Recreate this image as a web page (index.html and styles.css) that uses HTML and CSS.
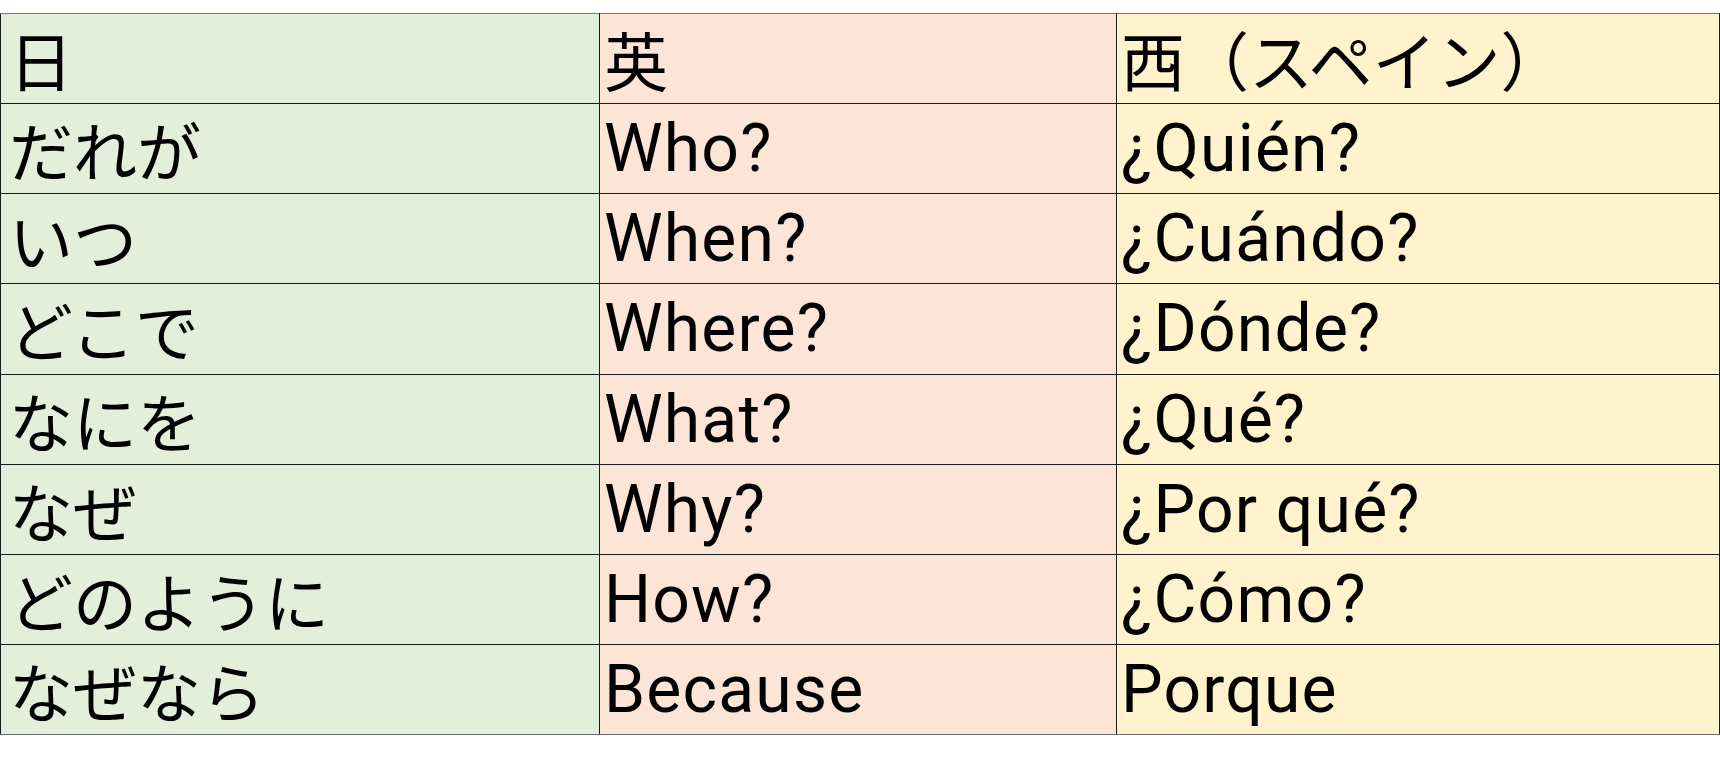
FILE: index.html
```html
<!DOCTYPE html>
<html lang="ja">
<head>
<meta charset="utf-8">
<link rel="stylesheet" href="styles.css">
</head>
<body>
<table class="grid">
  <colgroup>
    <col class="c-ja">
    <col class="c-en">
    <col class="c-es">
  </colgroup>
  <tbody>
    <tr><td class="ja">日</td><td class="en">英</td><td class="es">西（スペイン）</td></tr>
    <tr><td class="ja">だれが</td><td class="en latin">Who?</td><td class="es latin">¿Quién?</td></tr>
    <tr><td class="ja">いつ</td><td class="en latin">When?</td><td class="es latin">¿Cuándo?</td></tr>
    <tr><td class="ja">どこで</td><td class="en latin">Where?</td><td class="es latin">¿Dónde?</td></tr>
    <tr><td class="ja">なにを</td><td class="en latin">What?</td><td class="es latin">¿Qué?</td></tr>
    <tr><td class="ja">なぜ</td><td class="en latin">Why?</td><td class="es latin">¿Por qué?</td></tr>
    <tr><td class="ja">どのように</td><td class="en latin">How?</td><td class="es latin">¿Cómo?</td></tr>
    <tr><td class="ja">なぜなら</td><td class="en latin">Because</td><td class="es latin">Porque</td></tr>
  </tbody>
</table>
</body>
</html>
```
FILE: styles.css
```css
html, body {
  margin: 0;
  padding: 0;
  background: #ffffff;
}
body {
  padding-top: 13px;
  font-family: "Noto Sans CJK JP", "Noto Sans", sans-serif;
  color: #000;
}
.grid {
  border-collapse: collapse;
  table-layout: fixed;
  width: 1719px;
  font-size: 64px;
  line-height: 64px;
}
.c-ja { width: 599px; }
.c-en { width: 517px; }
.c-es { width: 603px; }
.grid tr {
  height: 90.15px;
}
.grid td {
  border: 1px solid #1a1a1a;
  padding: 12px 0 0 4px;
  vertical-align: top;
  white-space: nowrap;
  overflow: hidden;
}
.grid tr:first-child td {
  border-top-color: #7a7a7a;
}
.grid tr:last-child td {
  border-bottom-color: #6a6a6a;
}
.grid td.ja {
  background: #e2efda;
  padding-left: 8px;
}
.grid td.en {
  background: #fce4d6;
}
.grid td.es {
  background: #fff2cc;
}
.grid td.latin {
  font-family: "Roboto", "Noto Sans CJK JP", sans-serif;
  font-size: 66px;
  letter-spacing: 1.2px;
  padding-top: 13px;
}
```
